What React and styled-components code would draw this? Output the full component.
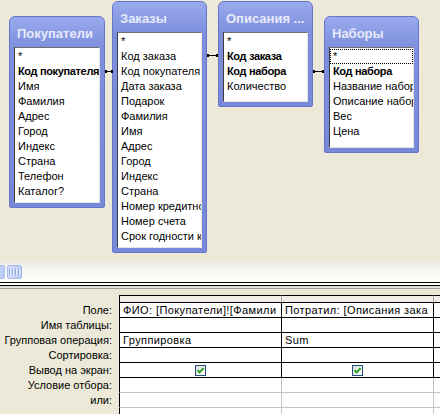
import React from 'react';
import styled, { createGlobalStyle } from 'styled-components';

const Global = createGlobalStyle`
  html, body { margin: 0; padding: 0; background: #ECE9D8; }
  body {
    font-family: "Liberation Sans", Arial, sans-serif;
    font-size: 11px;
    color: #000;
  }
  * { box-sizing: border-box; }
`;

const Screen = styled.div`
  width: 440px;
  height: 414px;
  overflow: hidden;
  display: flex;
  flex-direction: column;
  background: #ECE9D8;
`;

const Diagram = styled.div`
  position: relative;
  height: 261px;
  flex: none;
  background: #ECE9D8;
`;

const TableWin = styled.div`
  position: absolute;
  left: ${(p) => p.$x}px;
  top: ${(p) => p.$y}px;
  width: ${(p) => p.$w}px;
  padding: 0 4px 4px 4px;
  display: flex;
  flex-direction: column;
  background: linear-gradient(to bottom, #9AAAEE 0px, #7E8FDD 30px, #7888D8 100%);
  border: 1px solid #6676CF;
  border-radius: 6px 6px 2px 2px;
`;

const WinTitle = styled.div`
  height: 30px;
  padding: 2px 0 0 3px;
  display: flex;
  align-items: center;
  font-size: 13px;
  font-weight: bold;
  color: #E6EAFB;
  white-space: nowrap;
  overflow: hidden;
  text-shadow: 0 0 1px #8C9BE0;
`;

const FieldList = styled.div`
  height: ${(p) => p.$h}px;
  background: #fff;
  border-top: 1px solid #6E6E6E;
  border-left: 1px solid #3C3C3C;
  border-right: 1px solid #E3E3E3;
  border-bottom: 1px solid #E3E3E3;
  padding-top: 1px;
  overflow: hidden;
`;

const Field = styled.div`
  height: 15px;
  line-height: 15px;
  padding-left: 3px;
  white-space: nowrap;
  overflow: hidden;
  font-weight: ${(p) => (p.$key ? 'bold' : 'normal')};
  letter-spacing: ${(p) => (p.$key ? '-0.35px' : '0')};
  outline: ${(p) => (p.$focus ? '1px dotted #000' : 'none')};
  outline-offset: -1px;
`;

const JoinLine = styled.div`
  position: absolute;
  left: ${(p) => p.$x}px;
  top: ${(p) => p.$y}px;
  width: ${(p) => p.$w}px;
  height: 1px;
  background: #000;
  &::before, &::after {
    content: '';
    position: absolute;
    top: -1px;
    width: 2px;
    height: 3px;
    background: #000;
  }
  &::before { left: 0; }
  &::after { right: 0; }
`;

const ScrollTrack = styled.div`
  height: 20px;
  flex: none;
  display: flex;
  align-items: flex-start;
  gap: 2px;
  padding-top: 4px;
  background: linear-gradient(to bottom, #EAE8DE 0%, #F5F4EE 35%, #FDFDFB 100%);
`;

const ScrollPiece = styled.div`
  width: 15px;
  height: 14px;
  flex: none;
  margin-left: ${(p) => p.$offset || 0}px;
  border: 1px solid #A7BBEF;
  border-radius: 2px;
  background: linear-gradient(to right, #D3DEFC, #BACBF7);
  display: flex;
  align-items: center;
  justify-content: center;
  gap: 1px;
`;

const Grip = styled.span`
  width: 1px;
  height: 6px;
  background: #8BA1E5;
  box-shadow: 1px 0 0 #EEF3FF;
  margin-right: 1px;
`;

const Splitter = styled.div`
  height: 14px;
  flex: none;
  background: linear-gradient(
    to bottom,
    #FCFCFA 0 1px,
    #000 1px 2px,
    #fff 2px 4px,
    #000 4px 5px,
    #E2E0D6 5px 7px,
    #9F9E98 7px 8px,
    #ECE9D8 8px 14px
  );
`;

const Grid = styled.div`
  flex: 1;
  display: flex;
  flex-direction: column;
  background: #ECE9D8;
`;

const GridRow = styled.div`
  display: grid;
  grid-template-columns: 119px 162px 152px 1fr;
  height: ${(p) => p.$h}px;
  flex: none;
`;

const RowLabel = styled.div`
  text-align: right;
  padding-right: 7px;
  line-height: 15px;
  white-space: nowrap;
  color: #000;
`;

const Cell = styled.div`
  background: ${(p) => (p.$head ? '#F1EFE5' : '#fff')};
  border-left: 1px solid ${(p) => p.$lc};
  border-bottom: 1px solid ${(p) => p.$bc};
  border-top: ${(p) => (p.$head ? '1px solid #000' : '0')};
  display: flex;
  align-items: center;
  justify-content: ${(p) => (p.$center ? 'center' : 'flex-start')};
  min-width: 0;
  overflow: hidden;
`;

const CellText = styled.span`
  display: block;
  flex: 1;
  min-width: 0;
  margin: 0 5px 0 3px;
  white-space: nowrap;
  overflow: hidden;
  line-height: 14px;
  letter-spacing: 0.4px;
`;

const CheckBox = styled.span`
  width: 11px;
  height: 11px;
  border: 1px solid #1C5180;
  background: linear-gradient(135deg, #DCDCD6, #FFFFFF);
  display: flex;
  align-items: center;
  justify-content: center;
`;

const Check = () => (
  <CheckBox>
    <svg width="9" height="9" viewBox="0 0 9 9">
      <path d="M1.5 4.2 L3.6 6.3 L7.6 2.2" fill="none" stroke="#21A121" strokeWidth="1.9" />
    </svg>
  </CheckBox>
);

const tables = [
  {
    name: 'Покупатели', x: 9, y: 16, w: 96, h: 156,
    fields: ['*', ['Код покупателя'], 'Имя', 'Фамилия', 'Адрес', 'Город', 'Индекс', 'Страна', 'Телефон', 'Каталог?'],
  },
  {
    name: 'Заказы', x: 112, y: 1, w: 95, h: 216,
    fields: ['*', 'Код заказа', 'Код покупателя', 'Дата заказа', 'Подарок', 'Фамилия', 'Имя', 'Адрес', 'Город', 'Индекс', 'Страна', 'Номер кредитной карты', 'Номер счета', 'Срок годности карты'],
  },
  {
    name: 'Описания ...', x: 218, y: 1, w: 95, h: 70,
    fields: ['*', ['Код заказа'], ['Код набора'], 'Количество'],
  },
  {
    name: 'Наборы', x: 324, y: 16, w: 95, h: 101, focus: true,
    fields: ['*', ['Код набора'], 'Название набора', 'Описание набора', 'Вес', 'Цена'],
  },
];

const labels = ['Поле:', 'Имя таблицы:', 'Групповая операция:', 'Сортировка:', 'Вывод на экран:', 'Условие отбора:', 'или:', ''];
const col1 = ['ФИО: [Покупатели]![Фамилия] & " " & [Покупатели]![Имя]', '', 'Группировка', '', 'check', '', '', ''];
const col2 = ['Потратил: [Описания заказа]![Количество]', '', 'Sum', '', 'check', '', '', ''];

const renderCell = (v) => (v === 'check' ? <Check /> : <CellText>{v}</CellText>);

export default function App() {
  return (
    <Screen>
      <Global />
      <Diagram>
        {tables.map((t) => (
          <TableWin key={t.name} $x={t.x} $y={t.y} $w={t.w}>
            <WinTitle>{t.name}</WinTitle>
            <FieldList $h={t.h}>
              {t.fields.map((f, i) => {
                const isKey = Array.isArray(f);
                const label = isKey ? f[0] : f;
                return (
                  <Field key={i} $key={isKey} $focus={t.focus && i === 0}>
                    {label}
                  </Field>
                );
              })}
            </FieldList>
          </TableWin>
        ))}
        <JoinLine $x={105} $y={71} $w={8} />
        <JoinLine $x={207} $y={55} $w={11} />
        <JoinLine $x={313} $y={71} $w={11} />
      </Diagram>
      <ScrollTrack>
        <ScrollPiece $offset={-10} />
        <ScrollPiece>
          <Grip />
          <Grip />
          <Grip />
          <Grip />
        </ScrollPiece>
      </ScrollTrack>
      <Splitter />
      <Grid>
        <GridRow $h={8}>
          <RowLabel />
          <Cell $head $lc="#000" $bc="#000" />
          <Cell $head $lc="#A8A8A8" $bc="#000" />
          <Cell $head $lc="#A8A8A8" $bc="#000" />
        </GridRow>
        {labels.map((l, i) => {
          const strong = i < 5;
          const bc = strong ? '#000' : '#C4C4C4';
          const lc = strong ? '#000' : '#C4C4C4';
          return (
            <GridRow key={i} $h={15}>
              <RowLabel>{l}</RowLabel>
              <Cell $lc="#000" $bc={bc} $center={col1[i] === 'check'}>{renderCell(col1[i])}</Cell>
              <Cell $lc={lc} $bc={bc} $center={col2[i] === 'check'}>{renderCell(col2[i])}</Cell>
              <Cell $lc={lc} $bc={bc} />
            </GridRow>
          );
        })}
      </Grid>
    </Screen>
  );
}
